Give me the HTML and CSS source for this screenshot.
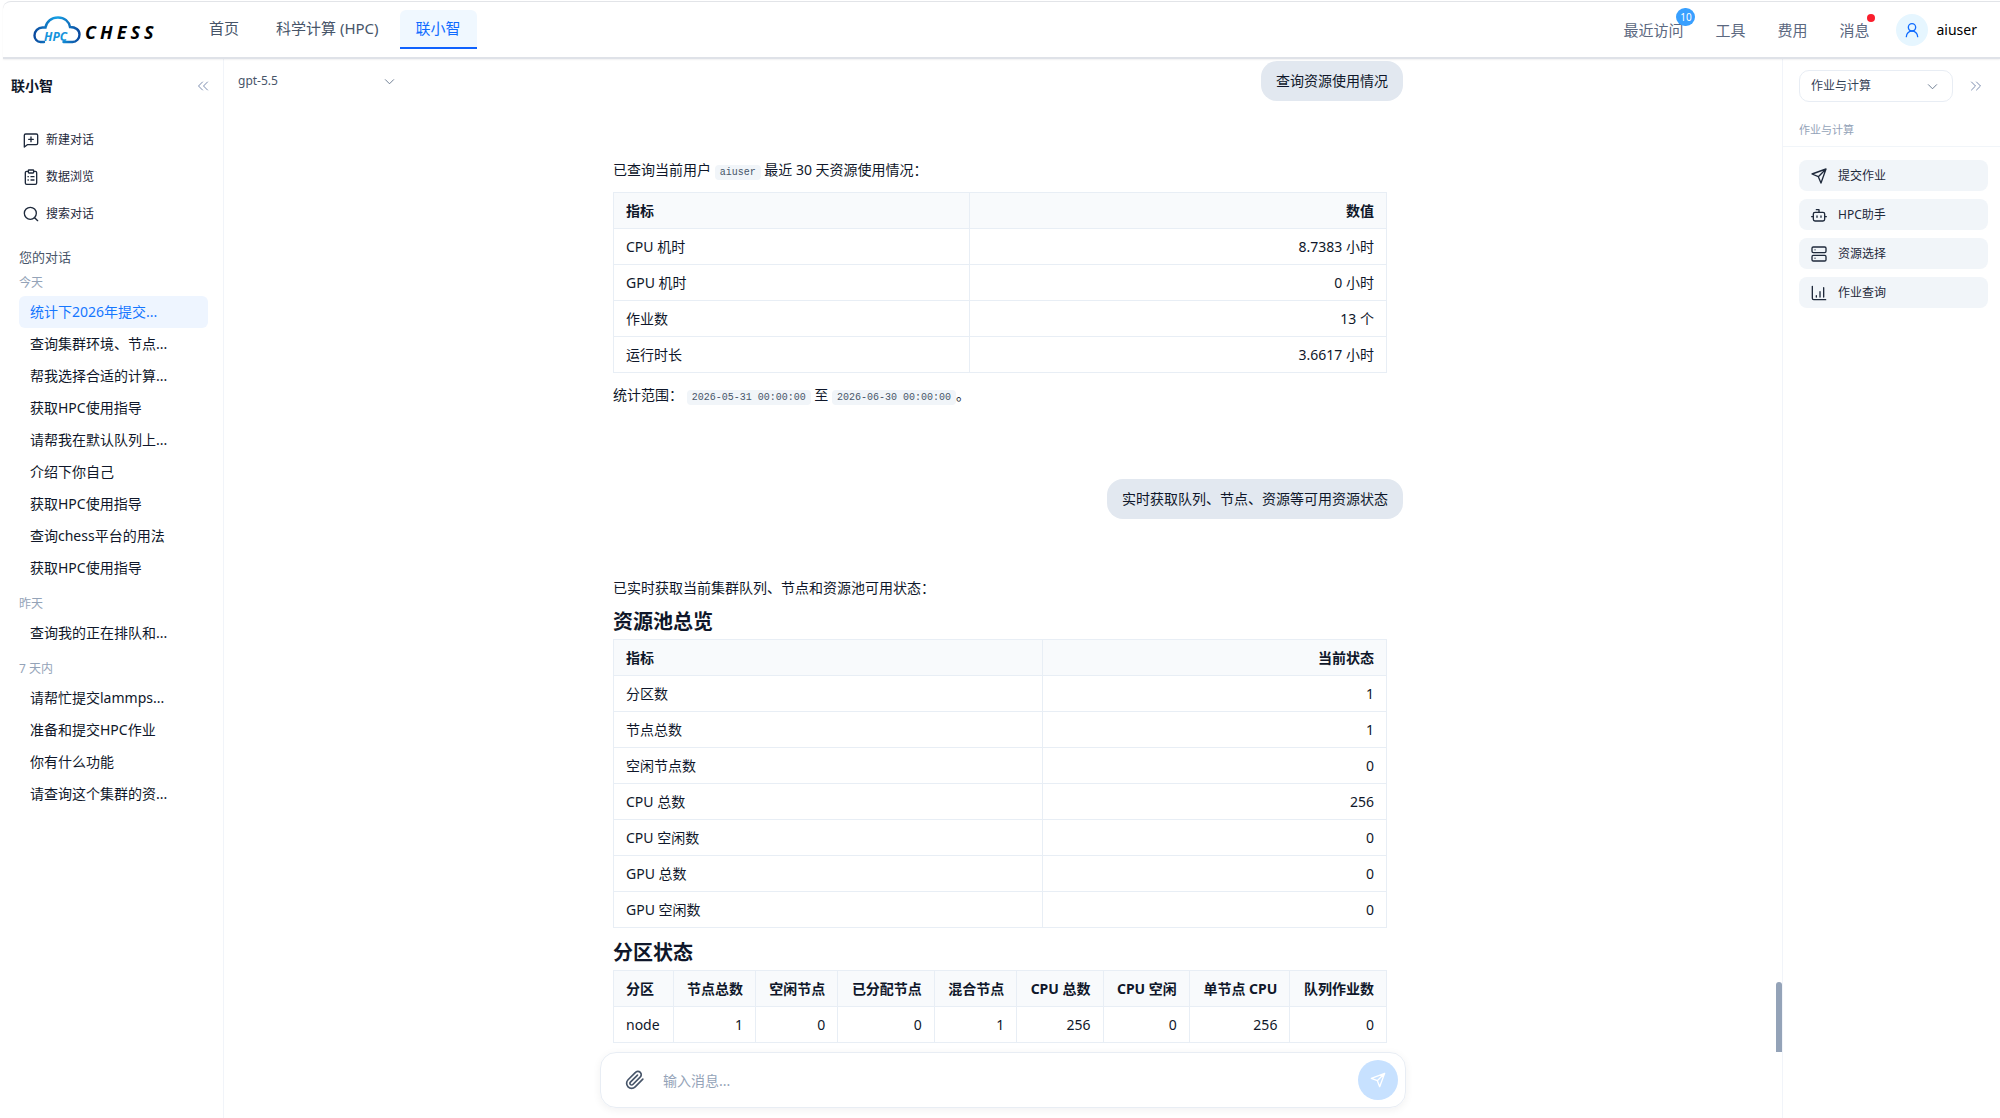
FILE: index.html
```html
<!DOCTYPE html>
<html lang="zh-CN">
<head>
    <meta charset="UTF-8">
    <meta name="viewport" content="width=device-width, initial-scale=1.0">
    <title>联小智</title>
    <link rel="stylesheet" href="styles.css">
</head>
<body>
    <div class="app">
        <header class="header">
            <a class="logo" href="#">
                <svg class="logo-cloud" viewBox="0 0 48 28" fill="none">
                    <defs>
                        <linearGradient id="cloud" x1="0" y1="0" x2="1" y2="0">
                            <stop offset="0" stop-color="#0b4a9e"/>
                            <stop offset="0.5" stop-color="#17a2e6"/>
                            <stop offset="1" stop-color="#0b4a9e"/>
                        </linearGradient>
                    </defs>
                    <path d="M11 26H7.500C4 26 1.500 23 1.500 19.500C1.500 15 5 11.500 9.500 11.500H12.500C13.500 5.500 18.500 1.500 25 1.500C31.500 1.500 36 5.500 37 11C42.500 11 46.500 14 46.500 18.500C46.500 22.500 43.500 26 39.500 26H30.500" stroke="url(#cloud)" stroke-width="2.400" stroke-linecap="round"/>
                    <text class="logo-hpc" x="11" y="25">HPC</text>
                </svg>
                <span class="logo-name">CHESS</span>
            </a>
            <nav class="nav">
                <a href="#">首页</a>
                <a href="#">科学计算 (HPC)</a>
                <a class="active" href="#">联小智</a>
            </nav>
            <div class="tools">
                <a href="#">最近访问<span class="badge">10</span></a>
                <a href="#">工具</a>
                <a href="#">费用</a>
                <a href="#">消息<span class="dot"></span></a>
            </div>
            <button class="user">
                <span class="avatar">
                    <svg class="icon" viewBox="0 0 24 24"><circle cx="12" cy="8" r="5.500"/><path d="M3.500 22a8.500 8.500 0 0 1 17 0"/></svg>
                </span>
                aiuser
            </button>
        </header>

        <div class="body">
            <aside class="sidebar">
                <div class="sidebar-head">
                    <h1>联小智</h1>
                    <button class="collapse" aria-label="收起">
                        <svg class="icon" viewBox="0 0 24 24"><path d="m11 20-8-8 8-8M21 20l-8-8 8-8"/></svg>
                    </button>
                </div>
                <div class="actions">
                    <button>
                        <svg class="icon" viewBox="0 0 24 24"><path d="M22 17a2 2 0 0 1-2 2H6.500L2 22.500V5a2 2 0 0 1 2-2h16a2 2 0 0 1 2 2zM12 7.500v7M8.500 11h7"/></svg>
                        新建对话
                    </button>
                    <button>
                        <svg class="icon" viewBox="0 0 24 24"><rect x="8" y="1.500" width="8" height="4.500" rx="1"/><path d="M16 3.500h2.500a2 2 0 0 1 2 2V21a2 2 0 0 1-2 2h-13a2 2 0 0 1-2-2V5.500a2 2 0 0 1 2-2H8M12 11.500h4.500M12 16.500h4.500M7.500 11.500h.5M7.500 16.500h.5"/></svg>
                        数据浏览
                    </button>
                    <button>
                        <svg class="icon" viewBox="0 0 24 24"><circle cx="11" cy="11" r="9"/><path d="m22 22-4.500-4.500"/></svg>
                        搜索对话
                    </button>
                </div>
                <h2>您的对话</h2>
                <section class="group">
                    <h3>今天</h3>
                    <a class="active" href="#">统计下2026年提交...</a>
                    <a href="#">查询集群环境、节点...</a>
                    <a href="#">帮我选择合适的计算...</a>
                    <a href="#">获取HPC使用指导</a>
                    <a href="#">请帮我在默认队列上...</a>
                    <a href="#">介绍下你自己</a>
                    <a href="#">获取HPC使用指导</a>
                    <a href="#">查询chess平台的用法</a>
                    <a href="#">获取HPC使用指导</a>
                </section>
                <section class="group">
                    <h3>昨天</h3>
                    <a href="#">查询我的正在排队和...</a>
                </section>
                <section class="group">
                    <h3>7 天内</h3>
                    <a href="#">请帮忙提交lammps...</a>
                    <a href="#">准备和提交HPC作业</a>
                    <a href="#">你有什么功能</a>
                    <a href="#">请查询这个集群的资...</a>
                </section>
            </aside>

            <main class="main">
                <div class="model">
                    <select aria-label="模型">
                        <option>gpt-5.5</option>
                    </select>
                    <svg class="icon chevron" viewBox="0 0 24 24"><path d="m3 8 9 9 9-9"/></svg>
                </div>

                <div class="scroll">
                    <div class="thread">
                        <div class="bubble">查询资源使用情况</div>
                        <div class="answer">
                            <p>已查询当前用户 <code>aiuser</code> 最近 30 天资源使用情况：</p>
                            <table class="usage">
                                <thead>
                                    <tr><th>指标</th><th>数值</th></tr>
                                </thead>
                                <tbody>
                                    <tr><td>CPU 机时</td><td>8.7383 小时</td></tr>
                                    <tr><td>GPU 机时</td><td>0 小时</td></tr>
                                    <tr><td>作业数</td><td>13 个</td></tr>
                                    <tr><td>运行时长</td><td>3.6617 小时</td></tr>
                                </tbody>
                            </table>
                            <p>统计范围： <code>2026-05-31 00:00:00</code> 至 <code>2026-06-30 00:00:00</code>。</p>
                        </div>
                        <div class="bubble">实时获取队列、节点、资源等可用资源状态</div>
                        <div class="answer">
                            <p>已实时获取当前集群队列、节点和资源池可用状态：</p>
                            <h3>资源池总览</h3>
                            <table class="pool">
                                <thead>
                                    <tr><th>指标</th><th>当前状态</th></tr>
                                </thead>
                                <tbody>
                                    <tr><td>分区数</td><td>1</td></tr>
                                    <tr><td>节点总数</td><td>1</td></tr>
                                    <tr><td>空闲节点数</td><td>0</td></tr>
                                    <tr><td>CPU 总数</td><td>256</td></tr>
                                    <tr><td>CPU 空闲数</td><td>0</td></tr>
                                    <tr><td>GPU 总数</td><td>0</td></tr>
                                    <tr><td>GPU 空闲数</td><td>0</td></tr>
                                </tbody>
                            </table>
                            <h3>分区状态</h3>
                            <table>
                                <thead>
                                    <tr><th>分区</th><th>节点总数</th><th>空闲节点</th><th>已分配节点</th><th>混合节点</th><th>CPU 总数</th><th>CPU 空闲</th><th>单节点 CPU</th><th>队列作业数</th></tr>
                                </thead>
                                <tbody>
                                    <tr><td>node</td><td>1</td><td>0</td><td>0</td><td>1</td><td>256</td><td>0</td><td>256</td><td>0</td></tr>
                                </tbody>
                            </table>
                        </div>
                    </div>
                    <div class="scroll-thumb"></div>
                </div>

                <form class="composer">
                    <button type="button" class="attach" aria-label="附件">
                        <svg class="icon" viewBox="0 0 24 24"><path d="m21.400 11-9.200 9.200a6 6 0 0 1-8.500-8.500l8.600-8.500a4 4 0 1 1 5.600 5.600l-8.500 8.600a2 2 0 0 1-2.900-2.900l8.500-8.400"/></svg>
                    </button>
                    <input type="text" aria-label="消息" placeholder="输入消息...">
                    <button class="send" aria-label="发送">
                        <svg class="icon" viewBox="0 0 24 24"><path d="M22 2 14.500 22 11 13 2 9.500zM22 2 11 13"/></svg>
                    </button>
                </form>
            </main>

            <aside class="panel">
                <div class="panel-head">
                    <div class="category">
                        <select aria-label="分类">
                            <option>作业与计算</option>
                        </select>
                        <svg class="icon chevron" viewBox="0 0 24 24"><path d="m3 8 9 9 9-9"/></svg>
                    </div>
                    <button class="collapse" aria-label="收起">
                        <svg class="icon" viewBox="0 0 24 24"><path d="m13 20 8-8-8-8M3 20l8-8-8-8"/></svg>
                    </button>
                </div>
                <h2>作业与计算</h2>
                <div class="shortcuts">
                    <button>
                        <svg class="icon" viewBox="0 0 24 24"><path d="M22.500 1.500 15 22.500 11 13 1.500 9zM22.500 1.500 11 13"/></svg>
                        提交作业
                    </button>
                    <button>
                        <svg class="icon" viewBox="0 0 24 24"><path d="M12 8V4H8M1 14.500h2M21 14.500h2M9 13.500v2M15 13.500v2"/><rect x="3.500" y="8" width="17" height="13" rx="2.500"/></svg>
                        HPC助手
                    </button>
                    <button>
                        <svg class="icon" viewBox="0 0 24 24"><rect x="1.500" y="1.500" width="21" height="8.500" rx="2"/><rect x="1.500" y="14" width="21" height="8.500" rx="2"/><path d="M6 5.800h.1M6 18.200h.1"/></svg>
                        资源选择
                    </button>
                    <button>
                        <svg class="icon" viewBox="0 0 24 24"><path d="M2 2v18a2 2 0 0 0 2 2h18M8 18v-2M13.500 18v-8M19 18V4"/></svg>
                        作业查询
                    </button>
                </div>
            </aside>
        </div>
    </div>
</body>
</html>
```
FILE: styles.css
```css
* {
    margin: 0;
    padding: 0;
    box-sizing: border-box;
}

body {
    background: #fff;
    color: #0f172a;
    font-family: "Noto Sans", "Noto Sans CJK SC", sans-serif;
    font-size: 14px;
    line-height: 20px;
}

a {
    color: inherit;
    text-decoration: none;
}

button,
select,
input {
    background: none;
    border: none;
    outline: none;
    color: inherit;
    font: inherit;
}

button {
    cursor: pointer;
}

select {
    appearance: none;
    width: 100%;
}

.icon {
    width: 16px;
    height: 16px;
    flex-shrink: 0;
    fill: none;
    stroke: currentColor;
    stroke-width: 2;
    stroke-linecap: round;
    stroke-linejoin: round;
}

.app {
    display: flex;
    flex-direction: column;
    height: 100vh;
    padding: 1px 0 0 3px;
    overflow: hidden;
}

/* Header */
.header {
    position: relative;
    z-index: 2;
    display: flex;
    align-items: center;
    height: 58px;
    flex-shrink: 0;
    padding-right: 23px;
    border-top: 1px solid #e2e4e8;
    border-bottom: 2px solid #dfe2e8;
    border-top-left-radius: 8px;
    box-shadow: 0 1px 2px rgba(15, 23, 42, 0.06);
}

.logo {
    display: flex;
    align-items: center;
    gap: 4px;
    width: 190px;
    padding-left: 30px;
}

.logo-cloud {
    width: 48px;
    height: 28px;
    flex-shrink: 0;
    overflow: visible;
}

.logo-hpc {
    fill: #1593dc;
    font-size: 12px;
    font-style: italic;
    font-weight: 700;
}

.logo-name {
    padding-top: 4px;
    color: #000;
    font-size: 18px;
    font-style: italic;
    font-weight: 700;
    letter-spacing: 4px;
}

.nav {
    display: flex;
    color: #475569;
    font-size: 15px;
}

.nav a {
    height: 39px;
    padding: 8px 16px 0;
    border-bottom: 2px solid transparent;
    border-radius: 6px 6px 0 0;
}

.nav a + a {
    margin-left: 5px;
}

.nav .active {
    background: #f0f8ff;
    border-bottom-color: #0f62fe;
    color: #0f6bff;
}

.tools {
    display: flex;
    gap: 32px;
    margin-left: auto;
    color: #5b6880;
    font-size: 15px;
}

.tools a {
    position: relative;
}

.badge {
    position: absolute;
    top: -12px;
    right: -12px;
    min-width: 19px;
    height: 18px;
    border-radius: 9px;
    background: #38a0ff;
    color: #fff;
    font-size: 10px;
    line-height: 18px;
    text-align: center;
}

.dot {
    position: absolute;
    top: -6px;
    right: -6px;
    width: 8px;
    height: 8px;
    border-radius: 50%;
    background: #fa1e2d;
}

.user {
    display: flex;
    align-items: center;
    gap: 8px;
    margin-left: 27px;
    color: #000;
}

.avatar {
    display: flex;
    align-items: center;
    justify-content: center;
    width: 32px;
    height: 32px;
    border-radius: 50%;
    background: #e6f6ff;
    color: #0f6bff;
}

.body {
    display: flex;
    flex: 1;
    min-height: 0;
}

.collapse {
    display: flex;
    color: #7c8db0;
}

.collapse .icon {
    width: 12px;
    height: 12px;
}

/* Conversation list */
.sidebar {
    width: 221px;
    flex-shrink: 0;
    padding: 0 16px;
    border-right: 1px solid #f1f4f9;
}

.sidebar-head {
    display: flex;
    align-items: center;
    justify-content: space-between;
    height: 54px;
    margin: 0 -2px 8px -8px;
}

.sidebar-head h1 {
    font-size: 14px;
}

.actions button {
    display: flex;
    align-items: center;
    gap: 7px;
    width: 100%;
    height: 37px;
    padding-left: 4px;
    color: #1e293b;
    font-size: 12px;
}

.sidebar h2 {
    margin-top: 12px;
    color: #475569;
    font-size: 13px;
    font-weight: 400;
    line-height: 26px;
}

.group + .group {
    margin-top: 7px;
}

.group h3 {
    color: #94a3b8;
    font-size: 12px;
    font-weight: 400;
    line-height: 26px;
}

.group a {
    display: block;
    margin-right: -1px;
    padding-left: 11px;
    border-radius: 6px;
    line-height: 32px;
    white-space: nowrap;
}

.group .active {
    background: #eef5ff;
    color: #1677ff;
}

/* Chat */
.main {
    position: relative;
    display: flex;
    flex: 1;
    flex-direction: column;
    align-items: center;
    min-width: 0;
}

.model {
    position: absolute;
    top: 6px;
    left: 14px;
    z-index: 1;
    width: 161px;
    color: #475569;
    font-size: 12px;
}

.model select {
    height: 32px;
}

.chevron {
    position: absolute;
    top: 11px;
    right: 4px;
    width: 11px;
    height: 11px;
    color: #64748b;
    pointer-events: none;
}

.scroll {
    position: relative;
    display: flex;
    flex: 1;
    justify-content: center;
    width: 100%;
    min-height: 0;
    overflow: hidden;
}

.scroll-thumb {
    position: absolute;
    right: 0;
    bottom: 0;
    width: 6px;
    height: 70px;
    border-radius: 3px 3px 0 0;
    background: #94a3b8;
}

.thread {
    display: flex;
    flex-direction: column;
    width: 100%;
    max-width: 806px;
    padding: 2px 3px 0 13px;
}

.bubble {
    align-self: flex-end;
    padding: 10px 15px;
    border-radius: 16px;
    background: #e2e8f0;
}

.answer {
    padding: 57px 16px 72px 0;
}

.answer p {
    line-height: 24px;
}

.answer h3 {
    margin: 8px 0 3px;
    font-size: 20px;
    line-height: 28px;
}

.answer code {
    padding: 2px 5px;
    border-radius: 4px;
    background: #f1f5f9;
    color: #475569;
    font-family: "Liberation Mono", monospace;
    font-size: 10px;
    line-height: 1;
}

table {
    width: 100%;
    border-collapse: collapse;
}

.usage {
    margin: 10px 0;
}

.usage th:first-child {
    width: 46%;
}

.pool {
    margin-bottom: 11px;
}

.pool th:first-child {
    width: 429px;
}

th,
td {
    height: 36px;
    padding: 0 12px;
    border: 1px solid #e8eef5;
    text-align: right;
    white-space: nowrap;
}

th {
    background: #f8fafc;
}

th:first-child,
td:first-child {
    text-align: left;
}

.composer {
    display: flex;
    align-items: center;
    width: 100%;
    max-width: 806px;
    height: 56px;
    flex-shrink: 0;
    margin-bottom: 10px;
    padding: 0 7px 0 24px;
    border: 1px solid #e8edf4;
    border-radius: 16px;
    box-shadow: 0 2px 8px rgba(15, 23, 42, 0.06);
}

.attach {
    display: flex;
    margin-right: 18px;
    color: #475569;
}

.attach .icon {
    width: 20px;
    height: 20px;
}

.composer input {
    flex: 1;
    min-width: 0;
    height: 40px;
}

.composer input::placeholder {
    color: #94a3b8;
}

.send {
    display: flex;
    align-items: center;
    justify-content: center;
    width: 40px;
    height: 40px;
    border-radius: 50%;
    background: #c7e1ff;
    color: #fff;
}

/* Shortcut panel */
.panel {
    width: 218px;
    flex-shrink: 0;
    border-left: 1px solid #f1f4f9;
}

.panel-head {
    display: flex;
    align-items: center;
    justify-content: space-between;
    padding: 11px 18px 0 16px;
}

.category {
    position: relative;
    width: 154px;
    color: #334155;
    font-size: 12px;
}

.category select {
    height: 32px;
    padding-left: 11px;
    border: 1px solid #e8edf4;
    border-radius: 10px;
}

.category .chevron {
    right: 15px;
}

.panel h2 {
    padding: 18px 16px 6px;
    border-bottom: 1px solid #f1f5f9;
    color: #94a3b8;
    font-size: 11px;
    font-weight: 400;
}

.shortcuts {
    display: flex;
    flex-direction: column;
    gap: 8px;
    padding: 13px 12px 0 16px;
}

.shortcuts button {
    display: flex;
    align-items: center;
    gap: 11px;
    height: 31px;
    padding-left: 12px;
    border-radius: 8px;
    background: #f1f5f9;
    color: #1e293b;
    font-size: 12px;
}
```
